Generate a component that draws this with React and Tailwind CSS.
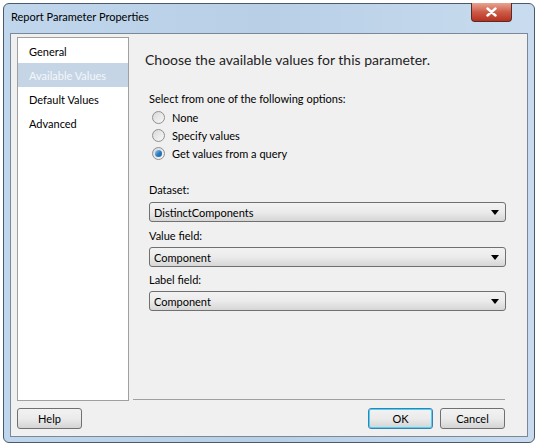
import { useState } from 'react'

const PAGES = ['General', 'Available Values', 'Default Values', 'Advanced']
const OPTIONS = ['None', 'Specify values', 'Get values from a query']

function Radio({ checked }) {
  return (
    <span className="w-[13px] h-[13px] rounded-full border border-[#8e8f8f] bg-gradient-to-br from-[#d9d9d9] to-[#f8f8f8] flex items-center justify-center shrink-0">
      {checked && <span className="w-[7px] h-[7px] rounded-full bg-gradient-to-br from-[#9ad0f5] via-[#2a7fc3] to-[#1b5e9c]" />}
    </span>
  )
}

function Combo({ value }) {
  return (
    <div className="h-[20px] w-[357px] rounded-[3px] border border-[#707070] bg-gradient-to-b from-[#f2f2f2] via-[#ebebeb] to-[#d6d6d6] flex items-center px-[4px]">
      <span className="flex-1 text-[11px] leading-[15px] text-black">{value}</span>
      <svg width="8" height="5" viewBox="0 0 8 5" className="mr-[2px]"><path d="M0 0h8L4 5z" fill="#000" /></svg>
    </div>
  )
}

function Btn({ children, primary }) {
  return (
    <button className={`h-[21px] w-[65px] rounded-[3px] border text-[11px] leading-[15px] text-black bg-gradient-to-b from-[#f2f2f2] via-[#ebebeb] to-[#d4d4d4] ${primary ? 'border-[#3c7fb1] shadow-[inset_0_0_0_1px_#48d5f5]' : 'border-[#707070]'}`}>
      {children}
    </button>
  )
}

export default function App() {
  const [page, setPage] = useState('Available Values')
  const [opt, setOpt] = useState('Get values from a query')
  return (
    <div className="w-[538px] h-[445px] bg-white p-[3px] pb-[2px] font-['Lato','Open_Sans',sans-serif]">
      <div className="h-full rounded-[6px] border border-[#4b5a6b] bg-gradient-to-r from-[#c0d6ec] via-[#b8cfe6] to-[#c9dcef] flex flex-col px-[6px] pb-[5px]">
        {/* title bar */}
        <div className="h-[29px] flex items-start relative">
          <span className="mt-[5px] ml-[1px] text-[11px] leading-[15px] text-black">Report Parameter Properties</span>
          <div className="absolute right-[16px] top-[-1px] w-[41px] h-[19px] rounded-b-[4px] border border-[#5a2a24] border-t-0 bg-gradient-to-b from-[#e7a393] via-[#cd5b47] to-[#b6301d] flex items-center justify-center">
            <svg width="11" height="10" viewBox="0 0 11 10"><path d="M1.5 1.5l8 7M9.5 1.5l-8 7" stroke="#fff" strokeWidth="2.4" strokeLinecap="round" /></svg>
          </div>
        </div>
        {/* client */}
        <div className="flex-1 border border-[#7b8898] bg-[#f0f0f0] flex flex-col px-[6px] pt-[3px]">
          <div className="flex">
            <div className="w-[112px] h-[364px] bg-white border border-[#a0a0a0] pt-[1px]">
              {PAGES.map(p => (
                <div key={p} onClick={() => setPage(p)}
                  className={`h-[24px] flex items-center pl-[11px] text-[11px] leading-[15px] ${page === p ? 'bg-[#c5d5e6] text-[#f4f7fa]' : 'text-black'}`}>
                  {p}
                </div>
              ))}
            </div>
            <div className="flex-1 flex flex-col pl-[20px] pt-[14px]">
              <div className="text-[14px] leading-[18px] text-[#1e1e1e] ml-[-4px]">Choose the available values for this parameter.</div>
              <div className="mt-[22px] text-[11px] leading-[15px] text-black">Select from one of the following options:</div>
              <div className="flex flex-col gap-[3px] mt-[4px] ml-[3px]">
                {OPTIONS.map(o => (
                  <label key={o} onClick={() => setOpt(o)} className="h-[15px] flex items-center gap-[7px] text-[11px] leading-[15px] text-black">
                    <Radio checked={opt === o} />
                    {o}
                  </label>
                ))}
              </div>
              <div className="mt-[21px] text-[11px] leading-[15px] text-black">Dataset:</div>
              <div className="mt-[5px]"><Combo value="DistinctComponents" /></div>
              <div className="mt-[6px] text-[11px] leading-[15px] text-black">Value field:</div>
              <div className="mt-[4px]"><Combo value="Component" /></div>
              <div className="mt-[5px] text-[11px] leading-[15px] text-black">Label field:</div>
              <div className="mt-[4px]"><Combo value="Component" /></div>
            </div>
          </div>
          <div className="flex">
            <div className="w-[116px]" />
            <div className="flex-1 border-t border-[#a0a0a0] mr-[16px] mt-[-2px]" />
          </div>
          <div className="flex items-center mt-[7px] pr-[16px]">
            <Btn>Help</Btn>
            <div className="flex-1" />
            <Btn primary>OK</Btn>
            <div className="w-[7px]" />
            <Btn>Cancel</Btn>
          </div>
        </div>
      </div>
    </div>
  )
}
